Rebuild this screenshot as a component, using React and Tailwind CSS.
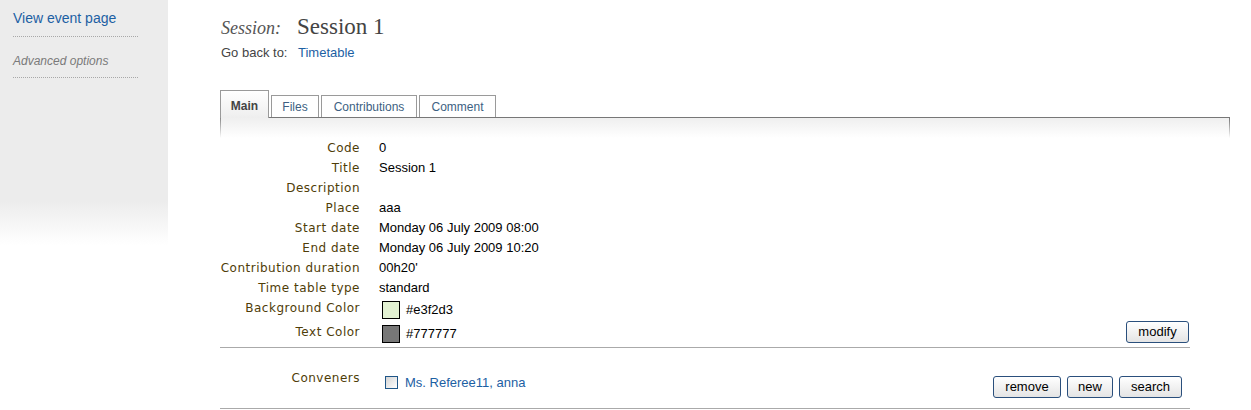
import React from "react";

const LABEL = "text-right text-[12px] leading-[20px] tracking-[0.5px] text-[#4f3d08] font-['DejaVu_Sans',Verdana,sans-serif]";
const VALUE = "text-[13px] leading-[20px] text-black";

function Row({ label, children, h = "h-[20px]" }) {
  return (
    <div className={`grid grid-cols-[140px_1fr] gap-x-[19px] ${h}`}>
      <div className={LABEL}>{label}</div>
      <div className={VALUE}>{children}</div>
    </div>
  );
}

function Btn({ w, children }) {
  return (
    <button
      className={`${w} h-[22px] border border-[#2a4f7c] rounded-[3px] bg-[linear-gradient(#ffffff,#e4e4e4)] text-[13px] leading-[20px] text-black text-center`}
    >
      {children}
    </button>
  );
}

export default function App() {
  return (
    <div className="flex w-[1251px] min-h-[410px] bg-white font-['Liberation_Sans',Arial,sans-serif]">
      <aside className="w-[168px] h-[245px] shrink-0 bg-[linear-gradient(to_bottom,#ececec_82%,#ffffff_100%)] pl-[13px] pr-[30px] pt-[8px]">
        <a className="block text-[14px] leading-[20px] text-[#1c60a3] pb-[8px] border-b border-dotted border-[#a8a8a8]">
          View event page
        </a>
        <div className="mt-[16px] text-[12px] leading-[16px] italic text-[#7a7a7a] pb-[8px] border-b border-dotted border-[#a8a8a8]">
          Advanced options
        </div>
      </aside>

      <main className="pl-[52px] flex-1">
        <div className="flex items-baseline pt-[12px] h-[41px] leading-[30px] font-['Liberation_Serif',serif]">
          <span className="w-[77px] pl-[1px] italic text-[18px] text-[#555]">Session:</span>
          <span className="text-[23px] text-[#444]">Session 1</span>
        </div>
        <div className="flex mt-[4px] text-[13px] leading-[16px]">
          <span className="w-[78px] pl-[1px] text-[#444]">Go back to:</span>
          <a className="text-[#1c60a3]">Timetable</a>
        </div>

        <div className="flex items-end gap-[2px] mt-[29px] h-[27px] text-[12px]">
          <div className="relative z-10 -mb-px w-[49px] h-[28px] border border-b-0 border-[#9a9a9a] bg-[linear-gradient(#ffffff,#eeeeee)] text-center font-bold text-[#444] leading-[30px]">
            Main
          </div>
          <div className="w-[48px] h-[22px] border border-b-0 border-[#9a9a9a] bg-white text-center text-[#3d5f82] leading-[22px]">
            Files
          </div>
          <div className="w-[96px] h-[22px] border border-b-0 border-[#9a9a9a] bg-white text-center text-[#3d5f82] leading-[22px]">
            Contributions
          </div>
          <div className="w-[77px] h-[22px] border border-b-0 border-[#9a9a9a] bg-white text-center text-[#3d5f82] leading-[22px]">
            Comment
          </div>
        </div>
        <div className="flex h-[21px] w-[1010px] border-t border-[#777] bg-[linear-gradient(#efefef,#ffffff)]">
          <div className="w-px bg-[linear-gradient(#8a8a8a,rgba(255,255,255,0))]" />
          <div className="flex-1" />
          <div className="w-px bg-[linear-gradient(#777,rgba(255,255,255,0))]" />
        </div>

        <div className="w-[970px]">
          <Row label="Code">0</Row>
          <Row label="Title">Session 1</Row>
          <Row label="Description"></Row>
          <Row label="Place">aaa</Row>
          <Row label="Start date">Monday 06 July 2009 08:00</Row>
          <Row label="End date">Monday 06 July 2009 10:20</Row>
          <Row label="Contribution duration">00h20'</Row>
          <Row label="Time table type">standard</Row>
          <Row label="Background Color" h="h-[24px]">
            <div className="flex items-center pt-[2px]">
              <span className="ml-[3px] w-[18px] h-[18px] border border-black bg-[#e3f2d3]" />
              <span className="ml-[6px]">#e3f2d3</span>
            </div>
          </Row>
          <Row label="Text Color" h="h-[25px]">
            <div className="flex items-start justify-between">
              <div className="flex items-center pt-[2px]">
                <span className="ml-[3px] w-[18px] h-[18px] border border-black bg-[#777777]" />
                <span className="ml-[6px]">#777777</span>
              </div>
              <div className="-mt-[1px] mr-[1px]">
                <Btn w="w-[63px]">modify</Btn>
              </div>
            </div>
          </Row>
          <div className="border-t border-[#aaaaaa]" />
          <div className="grid grid-cols-[140px_1fr] gap-x-[19px] pt-[20px] pb-[10px] border-b border-[#aaaaaa]">
            <div className={LABEL}>Conveners</div>
            <div className="flex items-start justify-between">
              <div className="flex items-center mt-[8px] h-[13px]">
                <span className="ml-[6px] w-[13px] h-[13px] border border-[#1f5688] bg-[linear-gradient(135deg,#d4d4d4,#ffffff)]" />
                <a className="ml-[7px] text-[13px] leading-[14px] text-[#1c60a3]">Ms. Referee11, anna</a>
              </div>
              <div className="flex gap-[6px] mt-[8px] mr-[8px]">
                <Btn w="w-[68px]">remove</Btn>
                <Btn w="w-[46px]">new</Btn>
                <Btn w="w-[63px]">search</Btn>
              </div>
            </div>
          </div>
        </div>
      </main>
    </div>
  );
}
